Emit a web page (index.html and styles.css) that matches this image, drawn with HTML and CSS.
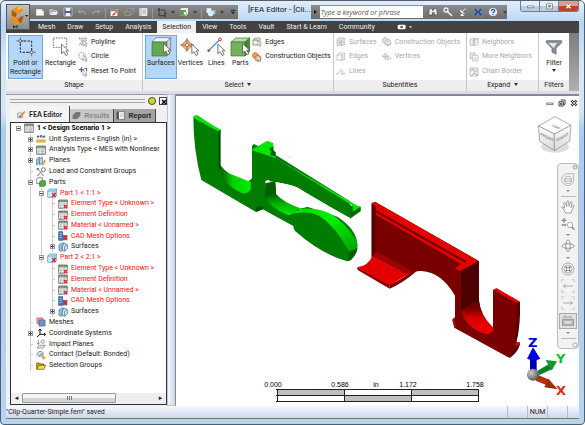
FILE: index.html
```
<!DOCTYPE html>
<html lang="en">
<head>
    <meta charset="UTF-8">
    <meta name="viewport" content="width=device-width, initial-scale=1.0">
    <title>FEA Editor</title>
    <link rel="stylesheet" href="styles.css">
</head>
<body>
    <!-- shared icons -->
    <svg class="defs" width="0" height="0">
        <defs>
            <linearGradient id="greenBlade" x1="0" y1="0" x2="1" y2="1">
                <stop offset="0" stop-color="#00d800"/>
                <stop offset=".45" stop-color="#00f000"/>
                <stop offset="1" stop-color="#00a000"/>
            </linearGradient>
            <linearGradient id="greenDip" x1="0" y1="0" x2="1" y2="0">
                <stop offset="0" stop-color="#005a00"/>
                <stop offset=".4" stop-color="#00d000"/>
                <stop offset="1" stop-color="#00ee00"/>
            </linearGradient>
            <linearGradient id="greenSlot" x1="0" y1="0" x2="0" y2="1">
                <stop offset="0" stop-color="#004c00"/>
                <stop offset=".5" stop-color="#00b000"/>
                <stop offset="1" stop-color="#00ee00"/>
            </linearGradient>
            <linearGradient id="redDip" x1="0" y1="0" x2="0" y2="1">
                <stop offset="0" stop-color="#4c0000"/>
                <stop offset=".3" stop-color="#800000"/>
                <stop offset=".55" stop-color="#d80000"/>
                <stop offset="1" stop-color="#f00000"/>
            </linearGradient>
            <linearGradient id="cubeShade" x1="0" y1="0" x2="0" y2="1">
                <stop offset="0" stop-color="#fff"/>
                <stop offset="1" stop-color="#d8d8d8"/>
            </linearGradient>
            <radialGradient id="ball" cx=".35" cy=".35" r=".7">
                <stop offset="0" stop-color="#ccc"/>
                <stop offset="1" stop-color="#555"/>
            </radialGradient>
            <symbol id="cursor" viewBox="0 0 20 32">
                <path d="M2 2v24l6-5 5 10 5-3-5-9h7z" fill="#fff" stroke="#555" stroke-width="2"/>
            </symbol>
            <symbol id="sheet" viewBox="0 0 30 30">
                <path d="M2 3h26v25H2z" fill="#eef2ee" stroke="#444" stroke-width="2"/>
                <path d="M2 3h26v7H2z" fill="#777"/>
                <path d="M5 5h5v3H5zM13 5h5v3h-5zM21 5h4v3h-4z" fill="#8fd08f"/>
                <path d="M6 15h5M14 15h10M6 20h5M14 20h10M6 25h5M14 25h10" stroke="#7b8a96" stroke-width="2"/>
            </symbol>
            <symbol id="sheet-x" viewBox="0 0 30 30">
                <use href="#sheet"/>
                <path d="M15 15h15v15H15z" fill="#fff" opacity=".6"/>
                <path d="M17 17l11 11M28 17L17 28" stroke="#d22" stroke-width="4"/>
            </symbol>
            <symbol id="part-x" viewBox="0 0 30 30">
                <path d="M2 9l6-6h21v19l-6 6H2z" fill="#cfeafa" stroke="#3f8fc4" stroke-width="2"/>
                <path d="M2 9h21v19M23 9l6-6" fill="none" stroke="#3f8fc4" stroke-width="2"/>
                <path d="M15 15l11 12M26 15L15 27" stroke="#d22" stroke-width="4"/>
            </symbol>
            <symbol id="mesh-x" viewBox="0 0 30 30">
                <path d="M2 2h12v26H2z" fill="#3d7fc0" stroke="#1f4d80" stroke-width="2"/>
                <path d="M5 7h6M5 13h6M5 19h6" stroke="#cfe5f8" stroke-width="2"/>
                <path d="M15 12h13v16H15z" fill="#777"/>
                <path d="M16 14l11 12M27 14L16 26" stroke="#d22" stroke-width="4"/>
            </symbol>
            <symbol id="surf" viewBox="0 0 30 30">
                <path d="M3 9l8-6h8l-6 7v16l-5 2-5-4z" fill="#9cc6e6" stroke="#2d5f86" stroke-width="2"/>
                <path d="M13 11l8-7 7 4v12l-8 8-7-3z" fill="#d8edf9" stroke="#2d5f86" stroke-width="2"/>
                <path d="M20 13v14M20 13l7-5" stroke="#2d5f86" stroke-width="2"/>
            </symbol>
        </defs>
    </svg>

    <header class="titlebar">
        <button class="app-button" aria-label="Application menu">
            <svg width="22" height="24" viewBox="0 0 66 72">
                <path d="M14 16l22-14 12 8-3 12-15 4-4 10h14l10-4-8 24-18 2-14-12 6-8z" fill="#e8921c"/>
                <path d="M14 16l16 10-4 10-12-4zM40 36l10-4-8 24-10-12z" fill="#a9590b"/>
                <path d="M36 2l12 8-18 6z" fill="#ffc04d"/>
                <path d="M54 30h10l-5 6z" fill="#222"/>
                <path d="M20 70v-8l5 5 5-5v8" fill="none" stroke="#222" stroke-width="3"/>
            </svg>
        </button>
        <div class="quick">
            <button aria-label="New"><svg viewBox="0 0 30 30"><path d="M3 6h17l7 7v13H3z" fill="#fafafa" stroke="#777"/><path d="M20 6v7h7" fill="#bbb"/></svg></button>
            <button aria-label="Open"><svg viewBox="0 0 30 30"><path d="M3 24V8h8l3 3h9v4" fill="#9ab" stroke="#eee" stroke-width="2"/><path d="M3 24l6-9h19l-6 9z" fill="#e4e9ee"/></svg></button>
            <button aria-label="Save"><svg viewBox="0 0 30 30"><path d="M3 3h24v24H3z" fill="#4b5f7a" stroke="#dde" stroke-width="2"/><path d="M8 3h14v9H8zM8 18h14v9H8z" fill="#f4f4f4"/></svg></button>
            <button aria-label="Undo"><svg viewBox="0 0 30 30"><path d="M10 8l-6 6 6 6M5 14h14q6 0 6 8" fill="none" stroke="#aaa" stroke-width="3"/></svg></button>
            <button aria-label="Redo"><svg viewBox="0 0 30 30"><path d="M20 8l6 6-6 6M25 14H11q-6 0-6 8" fill="none" stroke="#aaa" stroke-width="3"/></svg></button>
            <i></i>
            <button aria-label="Edit"><svg viewBox="0 0 30 30"><path d="M2 8h20v19H2z" fill="#fff"/><path d="M2 8h20v5H2z" fill="#4a94dc"/><path d="M10 20L24 4l4 4-13 15z" fill="#f08a24"/><path d="M6 26l4-7 5 5z" fill="#c33"/></svg></button>
            <button aria-label="Results"><svg viewBox="0 0 30 30"><path d="M3 14L14 4h14L18 14zM3 14v12h15V14M18 26l10-9V4" fill="#777" stroke="#aaa" stroke-width="2"/></svg></button>
            <button aria-label="Report"><svg viewBox="0 0 30 30"><path d="M4 3h24v24H4z" fill="#f4f4f4" stroke="#999"/><path d="M9 3v24M13 9h11M13 14h11M13 19h11" stroke="#888" stroke-width="2"/></svg></button>
            <i></i>
            <button aria-label="Selection shape"><svg viewBox="0 0 30 30"><path d="M6 3v6H1M6 9h18v17H6zM24 20h6M24 26v4" fill="none" stroke="#222" stroke-width="3" stroke-dasharray="4 2"/></svg></button>
            <b></b>
            <button aria-label="Select surfaces"><svg viewBox="0 0 30 30"><path d="M3 8l5-5h19v18l-5 5H3z" fill="#eee"/><path d="M3 9h18v17H3z" fill="#4ea34e"/><use href="#cursor" x="12" y="9" width="14" height="21"/></svg></button>
            <b></b>
            <i></i>
            <button aria-label="Visual style"><svg viewBox="0 0 30 30"><path d="M2 4h14v14H2z" fill="#eaf4fc"/><path d="M14 10h14v12H14z" fill="#a9cdea"/><circle cx="14" cy="20" r="8" fill="#dcebf8"/></svg></button>
            <b></b>
            <button class="custom" aria-label="Customize"><svg viewBox="0 0 30 30"><path d="M8 8h14v3H8zM8 14h14l-7 8z" fill="#222"/></svg></button>
        </div>
        <h1>[FEA Editor - [Cli...</h1>
        <div class="infocenter">
            <span class="play"></span>
            <input type="text" aria-label="Search help" placeholder="Type a keyword or phrase">
            <button aria-label="Search"><svg viewBox="0 0 30 30"><path d="M4 4h8l1 6h4l1-6h8l2 20h-9v-7h-6v7H2z" fill="#eee" stroke="#444" stroke-width="2"/></svg></button>
            <button aria-label="Subscription"><svg viewBox="0 0 30 30"><path d="M13 13l14 14" stroke="#eee" stroke-width="5"/><circle cx="9" cy="9" r="6" fill="none" stroke="#eee" stroke-width="4"/></svg></button>
            <button aria-label="Communication"><svg viewBox="0 0 30 30"><path d="M7 7q-2 14 14 13zM6 27l6-8 7 8z" fill="#eee"/><path d="M14 13l9-9" stroke="#eee" stroke-width="3"/></svg></button>
            <button aria-label="Exchange"><svg viewBox="0 0 30 30"><path d="M2 4h8l5 8 5-8h8v5l-7 6 7 6v6h-8l-5-8-5 8H2v-5l7-7-7-6z" fill="#2c4f93" stroke="#c8d4ea"/></svg></button>
            <button aria-label="Help"><svg viewBox="0 0 30 30"><circle cx="15" cy="15" r="13" fill="#eef4fc" stroke="#667"/><path d="M10 12q0-5 5-5t5 4q0 3-5 6v2M15 21v3" fill="none" stroke="#2458a8" stroke-width="4"/></svg></button>
            <b></b>
        </div>
        <div class="window-buttons">
            <button aria-label="Minimize"><svg viewBox="0 0 30 30"><path d="M5 13h20v6H5z" fill="#fff" stroke="#555" stroke-width="2"/></svg></button>
            <button aria-label="Maximize"><svg viewBox="0 0 30 30"><path d="M5 6h20v17H5z" fill="#fff" stroke="#555" stroke-width="2"/><path d="M11 12h8v5h-8z" fill="#9bb" stroke="#555" stroke-width="2"/></svg></button>
            <button class="close" aria-label="Close"><svg viewBox="0 0 30 30"><path d="M8 8l14 13M22 8L8 21" stroke="#555" stroke-width="8"/><path d="M8 8l14 13M22 8L8 21" stroke="#fff" stroke-width="5"/></svg></button>
        </div>
    </header>

    <nav class="menu">
        <a href="#">Mesh</a>
        <a href="#">Draw</a>
        <a href="#">Setup</a>
        <a href="#">Analysis</a>
        <a href="#" class="current">Selection</a>
        <a href="#">View</a>
        <a href="#">Tools</a>
        <a href="#">Vault</a>
        <a href="#">Start &amp; Learn</a>
        <a href="#">Community</a>
        <button aria-label="Minimize ribbon"><svg width="16" height="6" viewBox="0 0 48 18"><rect x="2" y="2" width="24" height="14" rx="4" fill="#fff"/><path d="M10 7h8v4h-8z" fill="#333"/><path d="M36 7h9l-4 5z" fill="#fff"/></svg></button>
    </nav>

    <div class="ribbon">
        <section class="panel shape">
            <div class="tools">
                <button class="big on">
                    <svg viewBox="0 0 66 60"><path d="M16 12h34v34H16z" fill="none" stroke="#222" stroke-width="3" stroke-dasharray="7 4"/><path d="M4 12h24M16 1v23M38 46h24M50 35v23" stroke="#444" stroke-width="2"/><circle cx="16" cy="12" r="4" fill="#fff" stroke="#333" stroke-width="2"/><circle cx="50" cy="46" r="4" fill="#fff" stroke="#333" stroke-width="2"/></svg>
                    Point or<br>Rectangle
                </button>
                <button class="big">
                    <svg viewBox="0 0 66 60"><path d="M10 3h40v28H10z" fill="none" stroke="#333" stroke-width="2" stroke-dasharray="5 3"/><use href="#cursor" x="32" y="19" width="24" height="38"/></svg>
                    Rectangle
                </button>
                <div class="list">
                    <button><svg viewBox="0 0 30 30"><path d="M2 3h24l-4 20H4l8-10z" fill="#ddd" stroke="#777" stroke-width="2" stroke-dasharray="4 2"/><use href="#cursor" x="13" y="7" width="15" height="23"/></svg>Polyline</button>
                    <button><svg viewBox="0 0 30 30"><circle cx="12" cy="12" r="10" fill="none" stroke="#555" stroke-width="2" stroke-dasharray="4 2"/><use href="#cursor" x="13" y="7" width="15" height="23"/></svg>Circle</button>
                    <button><svg viewBox="0 0 30 30"><path d="M2 8h16M10 0v16M19 4h7v9" fill="none" stroke="#356" stroke-width="3"/><use href="#cursor" x="13" y="7" width="15" height="23"/></svg>Reset To Point</button>
                </div>
            </div>
            <h2>Shape</h2>
        </section>
        <section class="panel select">
            <div class="tools">
                <button class="big on">
                    <svg viewBox="0 0 66 60"><path d="M6 15L18 2h44L50 15z" fill="#eef3f4" stroke="#667" stroke-width="2"/><path d="M50 15L62 2v42L50 57z" fill="#c8d4da" stroke="#667" stroke-width="2"/><path d="M6 15h44v42H6z" fill="#64a84f" stroke="#3b7431" stroke-width="2"/><use href="#cursor" x="38" y="17" width="24" height="38"/></svg>
                    Surfaces
                </button>
                <button class="big">
                    <svg viewBox="0 0 66 60"><path d="M24 7l17 17-17 17L7 24z" fill="#f2b183" stroke="#a86433" stroke-width="2"/><path d="M3 24h42M24 3v42" stroke="#8a5530" stroke-width="2"/><circle cx="24" cy="24" r="5" fill="#fff" stroke="#8a5530" stroke-width="2"/><use href="#cursor" x="36" y="19" width="24" height="38"/></svg>
                    Vertices
                </button>
                <button class="big">
                    <svg viewBox="0 0 66 60"><path d="M12 40L44 8" stroke="#4295d0" stroke-width="4"/><circle cx="11" cy="41" r="4" fill="#d33"/><circle cx="45" cy="7" r="4" fill="#fff" stroke="#d33" stroke-width="3"/><use href="#cursor" x="36" y="19" width="24" height="38"/></svg>
                    Lines
                </button>
                <button class="big">
                    <svg viewBox="0 0 66 60"><path d="M6 15L20 3h42L48 15z" fill="#b9dcaa" stroke="#39702b" stroke-width="2"/><path d="M48 15L62 3v40L48 57z" fill="#478637" stroke="#39702b" stroke-width="2"/><path d="M6 15h42v42H6z" fill="#72b259" stroke="#39702b" stroke-width="2"/><use href="#cursor" x="38" y="17" width="24" height="38"/></svg>
                    Parts
                </button>
                <div class="list">
                    <button><svg viewBox="0 0 30 30"><path d="M3 9l6-6h15v15l-6 6H3z" fill="#eef4ee" stroke="#667" stroke-width="2"/><path d="M3 9h15v15" fill="none" stroke="#5a5" stroke-width="3"/><use href="#cursor" x="14" y="8" width="14" height="22"/></svg>Edges</button>
                    <button><svg viewBox="0 0 30 30"><path d="M9 1l9 5v9l-9 5-7-5V6z" fill="#f0a25c" stroke="#b0662a" stroke-width="2"/><circle cx="18" cy="19" r="9" fill="#f7c08e" stroke="#b0662a" stroke-width="2"/><use href="#cursor" x="14" y="8" width="14" height="22"/></svg>Construction Objects</button>
                </div>
            </div>
            <h2>Select <b></b></h2>
        </section>
        <section class="panel sub">
            <div class="tools">
                <div class="list">
                    <button disabled><svg viewBox="0 0 30 30"><path d="M3 8l5-5h17v17l-5 5H3z" fill="#e4e4e4" stroke="#aaa" stroke-width="2"/><path d="M8 10h9v12H8z" fill="#ccc"/><path d="M17 12v14l4-4h6z" fill="#fff" stroke="#aaa" stroke-width="2"/></svg>Surfaces</button>
                    <button disabled><svg viewBox="0 0 30 30"><path d="M3 9l6-6h17v15l-6 6H3zM3 9h17v15M20 9l6-6" fill="#fff" stroke="#aaa" stroke-width="2"/><path d="M17 12v14l4-4h6z" fill="#fff" stroke="#aaa" stroke-width="2"/></svg>Edges</button>
                    <button disabled><svg viewBox="0 0 30 30"><path d="M3 21L17 5" stroke="#aaa" stroke-width="2"/><circle cx="3" cy="21" r="2" fill="#aaa"/><path d="M17 10v14l4-4h6z" fill="#fff" stroke="#aaa" stroke-width="2"/></svg>Lines</button>
                </div>
                <div class="list">
                    <button disabled><svg viewBox="0 0 30 30"><path d="M9 1l9 5v9l-9 5-7-5V6z" fill="#e4e4e4" stroke="#aaa" stroke-width="2"/><circle cx="18" cy="17" r="9" fill="#eee" stroke="#aaa" stroke-width="2"/><path d="M17 12v14l4-4h6z" fill="#fff" stroke="#aaa" stroke-width="2"/></svg>Construction Objects</button>
                    <button disabled><svg viewBox="0 0 30 30"><path d="M10 5l8 8-8 8-8-8zM0 13h20M10 3v20" fill="none" stroke="#aaa" stroke-width="2"/><path d="M17 10v14l4-4h6z" fill="#fff" stroke="#aaa" stroke-width="2"/></svg>Vertices</button>
                </div>
            </div>
            <h2>Subentities</h2>
        </section>
        <section class="panel expand">
            <div class="tools">
                <div class="list">
                    <button disabled><svg viewBox="0 0 30 30"><path d="M3 8l5-4h9v16l-4 5H3zM13 8h10l5-4v16l-5 5H13zM17 4h11" fill="#eee" stroke="#aaa" stroke-width="2"/></svg>Neighbors</button>
                    <button disabled><svg viewBox="0 0 30 30"><path d="M3 3h15v16H3z" fill="#eee" stroke="#aaa" stroke-width="2"/><path d="M10 10h17v17H10z" fill="#fff" stroke="#aaa" stroke-width="2"/><path d="M14 15h9v8h-9z" fill="#ddd"/></svg>More Neighbors</button>
                    <button disabled><svg viewBox="0 0 30 30"><path d="M3 3h24v24H3z" fill="#f4f4f4" stroke="#aaa" stroke-width="2"/><path d="M3 12l10-6 4 10 10-8M6 27l9-8 12 6" fill="none" stroke="#aaa" stroke-width="3"/></svg>Chain Border</button>
                </div>
            </div>
            <h2>Expand <b></b></h2>
        </section>
        <section class="panel filters">
            <div class="tools">
                <button class="big">
                    <svg viewBox="0 0 66 60"><path d="M10 11h46v6L39 34v18l-12-7V34L10 17z" fill="#8b9399" stroke="#50575c" stroke-width="2"/><path d="M16 18h26L32 33z" fill="#e4e8ea"/></svg>
                    Filter
                    <b></b>
                </button>
            </div>
            <h2>Filters</h2>
        </section>
    </div>

    <main>
        <aside>
            <div class="grip">
                <span></span>
                <button class="pin" aria-label="Pin"></button>
                <button aria-label="Close panel"><svg width="6" height="6" viewBox="0 0 6 6"><path d="M1 1l4 4M5 1L1 5" stroke="#000" stroke-width="1.5"/></svg></button>
            </div>
            <div class="tabs">
                <button class="active"><svg viewBox="0 0 30 30"><path d="M2 10h17v16H2z" fill="#dbeaf8" stroke="#58a" stroke-width="2"/><path d="M9 19L24 3l4 4-14 16z" fill="#f08a24"/><path d="M6 26l3-8 6 5z" fill="#c33"/></svg>FEA Editor</button>
                <button disabled><svg viewBox="0 0 30 30"><path d="M2 14L13 3h15v12L17 27H2z" fill="#777"/></svg>Results</button>
                <button><svg viewBox="0 0 30 30"><path d="M2 2h26v26H2z" fill="#fff" stroke="#444" stroke-width="2"/><path d="M3 3h7v24H3z" fill="#555"/><path d="M14 9h10M14 14h10M14 19h10" stroke="#99a" stroke-width="2"/></svg>Report</button>
            </div>
            <div class="tree">
                <ul>
                    <li class="root"><i class="box open"></i><svg><use href="#sheet"/></svg>1 &lt; Design Scenario 1 &gt;</li>
                    <li class="l1"><i class="box"></i><svg viewBox="0 0 30 30"><path d="M2 17h26v8H2z" fill="#f2b63a" stroke="#a87414"/><path d="M4 11V6h4v5M13 11V5h5v6M22 11V6h4v5" fill="none" stroke="#456" stroke-width="3"/></svg>Unit Systems &lt; English (in) &gt;</li>
                    <li class="l1"><i class="box"></i><svg><use href="#sheet"/></svg>Analysis Type &lt; MES with Nonlinear</li>
                    <li class="l1"><i class="box"></i><svg viewBox="0 0 30 30"><path d="M2 10l8-7v17l-8 7z" fill="#a7cfee" stroke="#268" stroke-width="2"/><path d="M11 10l8-7v17l-8 7z" fill="#cde5f7" stroke="#268" stroke-width="2"/><path d="M17 26l9-14 3 3-9 13z" fill="#f39a2a" stroke="#853"/></svg>Planes</li>
                    <li class="l1"><i class="leaf"></i><svg viewBox="0 0 30 30"><path d="M4 5l10 10 8 12M14 15L4 27M3 5h6M4 4v6" fill="none" stroke="#333" stroke-width="2"/><circle cx="22" cy="8" r="6" fill="#fff" stroke="#333" stroke-width="2"/></svg>Load and Constraint Groups</li>
                    <li class="l1"><i class="box open"></i><svg viewBox="0 0 30 30"><path d="M2 5l4-3h13v18H2z" fill="#fff" stroke="#555" stroke-width="2"/><path d="M11 14l4-3h13v14l-3 3H11z" fill="#4fae4a" stroke="#276b25" stroke-width="2"/></svg>Parts</li>
                    <li class="l2 bad"><i class="box open"></i><svg><use href="#part-x"/></svg>Part 1 &lt; 1:1 &gt;</li>
                    <li class="l3 bad"><i class="leaf"></i><svg><use href="#sheet-x"/></svg>Element Type &lt; Unknown &gt;</li>
                    <li class="l3 bad"><i class="leaf"></i><svg><use href="#sheet-x"/></svg>Element Definition</li>
                    <li class="l3 bad"><i class="leaf"></i><svg><use href="#sheet-x"/></svg>Material &lt; Unnamed &gt;</li>
                    <li class="l3 bad"><i class="leaf"></i><svg><use href="#mesh-x"/></svg>CAD Mesh Options</li>
                    <li class="l3"><i class="box"></i><svg><use href="#surf"/></svg>Surfaces</li>
                    <li class="l2 bad"><i class="box open"></i><svg><use href="#part-x"/></svg>Part 2 &lt; 2:1 &gt;</li>
                    <li class="l3 bad last"><i class="leaf"></i><svg><use href="#sheet-x"/></svg>Element Type &lt; Unknown &gt;</li>
                    <li class="l3 bad last"><i class="leaf"></i><svg><use href="#sheet-x"/></svg>Element Definition</li>
                    <li class="l3 bad last"><i class="leaf"></i><svg><use href="#sheet-x"/></svg>Material &lt; Unnamed &gt;</li>
                    <li class="l3 bad last"><i class="leaf"></i><svg><use href="#mesh-x"/></svg>CAD Mesh Options</li>
                    <li class="l3 last"><i class="box"></i><svg><use href="#surf"/></svg>Surfaces</li>
                    <li class="l1"><i class="leaf"></i><svg viewBox="0 0 30 30"><path d="M3 3h17v17H3z" fill="#f0b0a8" stroke="#c33" stroke-width="2"/><path d="M9 9h18v18H9z" fill="#9ab8dc" stroke="#247" stroke-width="2"/><path d="M15 9v18M21 9v18M9 15h18M9 21h18" stroke="#247"/></svg>Meshes</li>
                    <li class="l1"><i class="box"></i><svg viewBox="0 0 30 30"><path d="M12 4v15h16M12 19l-9 8M8 8l4-5 4 5M24 15l5 4-5 4" fill="none" stroke="#111" stroke-width="3"/></svg>Coordinate Systems</li>
                    <li class="l1"><i class="leaf"></i><svg viewBox="0 0 30 30"><path d="M7 2v14M3 11l4 5 4-5M3 27l7-8h18l-7 8z" fill="#eef" stroke="#667" stroke-width="2"/><circle cx="20" cy="8" r="5" fill="#fff" stroke="#667" stroke-width="2"/></svg>Impact Planes</li>
                    <li class="l1"><i class="leaf"></i><svg viewBox="0 0 30 30"><path d="M2 13q3-10 15-9l6 6-11 3-2 7z" fill="#dde8f5" stroke="#568" stroke-width="2"/><path d="M13 15l7-2 3 4-8 3z" fill="#9bd" stroke="#568"/><path d="M23 17l6 6-6 6-6-6z" fill="#f2a52e"/></svg>Contact (Default: Bonded)</li>
                    <li class="l1"><i class="leaf"></i><svg viewBox="0 0 30 30"><path d="M2 25V6h9l3 3h10v5" fill="#d8a400" stroke="#443" stroke-width="2"/><path d="M2 25l6-12h21l-6 12z" fill="#ffdd33" stroke="#443" stroke-width="2"/></svg>Selection Groups</li>
                </ul>
                <div class="hscroll">
                    <button aria-label="Scroll left">&#9666;</button>
                    <div class="track"><span></span></div>
                    <button aria-label="Scroll right">&#9656;</button>
                </div>
            </div>
        </aside>
        <div class="splitter"></div>
        <div class="viewport">
            <svg class="scene" width="100%" height="100%">
                <!-- green part -->
                <g transform="translate(0 -6) scale(.3333)">
                    <path d="M52 80q0 100 24 190l164 96 20-8 92 50q0 10 6 16 80 70 156 90l12-4 18-40q2-50-60-90l-90-30-40 10-38-22-46-30-2-36 30-6 62 22 160 84 2-38-224-140-64-32-6 6v96q-10 14-24 10-50-20-72-50V122L64 76z" fill="#007c00"/>
                    <path d="M52 80l8-5 74 44v6h-6L52 83z" fill="#00e600"/>
                    <path d="M128 122l6-2v120l-6-6z" fill="#005000"/>
                    <path d="M134 240l90 36v22q-8 14-24 12-40-18-58-44z" fill="url(#greenDip)"/>
                    <path d="M226 180l48-28 18 8v20l8 8-2 16 248 144 8 4v8l-20 12-4-2-2-24-230-142z" fill="#00e600"/>
                    <path d="M280 176l12-7v12l7 6-1 12-16-4 4-10z" fill="#006000"/>
                    <path d="M522 346l10 4v14l22-14v14l-32 22z" fill="#006c00"/>
                    <path d="M532 350l22-2-24 16z" fill="#00e600"/>
                    <path d="M340 200l1 2M386 262l2 1M430 288l2 1M475 314l2 1" stroke="#004000" stroke-width="2"/>
                    <path d="M268 280l30-6 4 38-34 14z" fill="#006000"/>
                    <path d="M270 322l32-16q26 32 72 48l-36 22q-54-20-68-54z" fill="url(#greenSlot)"/>
                    <path d="M338 374l36-18q64-4 104 24 50 40 66 80v16l-24 10q-44-80-90-108-36-18-92-4z" fill="url(#greenBlade)"/>
                    <path d="M520 485l25-11q-4 28-30 40z" fill="#006000"/>
                    <path d="M240 352l20-4v10l-20 8z" fill="#004c00"/>
                    <path d="M302 277q60 10 74 22 30 20 148 86V346L280 208v66z" fill="#007c00"/>
                    <path d="M300 312V277q60 10 70 20 60 34 140 82l10 12-50-30q-50-20-96-6-50-16-74-43z" fill="#fff"/>
                </g>
                <!-- red part -->
                <g transform="translate(175 84) scale(.3333)">
                    <path d="M62 70l10-5 312 178v120q6 54 42 82V330l10-5 70 40q0 80-10 120l10 6q-4 22-28 42l-8-2-160-88-6-22 8-4v-70q-40-70-100-74-20-2-32 10L62 230z" fill="#780000"/>
                    <path d="M62 70l10-5 311 179-53 30-18-10 18-12L74 104v-14z" fill="#e40000"/>
                    <path d="M76 94l268 152" stroke="#6a0000" stroke-width="6"/>
                    <path d="M62 70l12 8v152l-12 8z" fill="#5a0000"/>
                    <path d="M330 272l53-29v120L330 394z" fill="#4c0000"/>
                    <path d="M330 392l53-34q6 50 43 84v12q-12 14-34 4-50-22-62-66z" fill="url(#redDip)"/>
                    <path d="M18 262q34-4 46-34l108 58q-20 6-56 32z" fill="#e40000"/>
                    <path d="M64 228l110 60 12-12-110-62z" fill="#a00000"/>
                    <path d="M18 262l98 54v10L20 270z" fill="#900000"/>
                    <path d="M116 316q40-24 84-46l-6 6q-40 34-78 50z" fill="#7a0000"/>
                    <path d="M427 330l10-5 70 40-8 5z" fill="#e40000"/>
                    <path d="M499 370l8-5q2 70-10 118l-6 20z" fill="#5a0000"/>
                    <path d="M494 490l12-4v10q-6 22-32 38z" fill="#600000"/>
                    <path d="M494 490l12-4v6l-14 8z" fill="#e40000"/>
                    <path d="M304 418l8-6v14q0 8 8 16l-10-4z" fill="#b00000"/>
                </g>
                <!-- axis triad -->
                <g transform="translate(175 84) scale(.3333)">
                    <path d="M537 538h20v42h-20z" fill="#0000b0"/>
                    <path d="M528 536l18-34 22 34q-20 10-40 0z" fill="#0000e0"/>
                    <path d="M560 572l34-20 8 16-38 18z" fill="#0a8028"/>
                    <path d="M584 540l34 4-16 28z" fill="#0a9a30"/>
                    <path d="M560 584l36 16-8 16-34-14z" fill="#b83010"/>
                    <path d="M592 596l28 32-40-6z" fill="#a02808"/>
                    <circle cx="546" cy="584" r="18" fill="url(#ball)"/>
                </g>
                <g class="axis">
                    <text x="352" y="251" fill="#0000e0">Z</text>
                    <text x="380" y="267" fill="#0ac030">Y</text>
                    <text x="380" y="299" fill="#d83010">X</text>
                </g>
                <!-- scale -->
                <g class="scale" shape-rendering="crispEdges">
                    <path d="M101 293h67v6h-67zM168 299h67v6h-67zM235 293h67v6h-67z" fill="#bfbfbf"/>
                    <path d="M100 293h203M100 299h203M100 305h203M101 293v12M168 293v12M235 293v12M302 293v12" stroke="#222" fill="none"/>
                    <text x="97" y="291">0.000</text>
                    <text x="164" y="291">0.586</text>
                    <text x="200" y="291">in</text>
                    <text x="232" y="291">1.172</text>
                    <text x="299" y="291">1.758</text>
                </g>
            </svg>
            <div class="doc-buttons">
                <button aria-label="Minimize view"><svg viewBox="0 0 24 24"><path d="M2 12h19v5H2z" fill="#fff" stroke="#444" stroke-width="2"/></svg></button>
                <button aria-label="Restore view"><svg viewBox="0 0 24 24"><path d="M8 3h13v13h-4M3 8h13v13H3zM8 12h4v5H8z" fill="#fff" stroke="#444" stroke-width="3"/></svg></button>
                <button aria-label="Close view"><svg viewBox="0 0 24 24"><path d="M4 4l16 16M20 4L4 20" stroke="#444" stroke-width="7"/><path d="M4 4l16 16M20 4L4 20" stroke="#fff" stroke-width="2"/></svg></button>
            </div>
            <svg class="cube" width="36" height="40" viewBox="0 0 108 120">
                <ellipse cx="54" cy="92" rx="42" ry="18" fill="#ddd"/>
                <path d="M54 2l48 26-50 26L4 30z" fill="#fff" stroke="#888" stroke-width="2"/>
                <path d="M4 30l48 24v50L8 76z" fill="url(#cubeShade)" stroke="#888" stroke-width="2"/>
                <path d="M52 54l50-26-4 48-46 28z" fill="url(#cubeShade)" stroke="#888" stroke-width="2"/>
                <g class="cube-text">
                    <text transform="matrix(.9 .4 -.7 .45 42 30)">TOP</text>
                    <text transform="matrix(.9 .45 0 1 10 58)">FRONT</text>
                    <text transform="matrix(.9 -.5 0 1 58 78)">RIGHT</text>
                </g>
            </svg>
            <div class="navbar">
                <svg class="dot" viewBox="0 0 30 30"><circle cx="15" cy="15" r="10" fill="#ddd" stroke="#999" stroke-width="4"/></svg>
                <button aria-label="Steering wheel"><svg viewBox="0 0 42 42"><path d="M21 2h17v19a18 18 0 1 1-17-19z" fill="#f2f2f2" stroke="#999" stroke-width="2"/><circle cx="21" cy="21" r="11" fill="#fff" stroke="#999" stroke-width="2"/><path d="M13 17h16v9H13zM13 21h16" fill="none" stroke="#aaa" stroke-width="2"/></svg></button>
                <b></b>
                <hr>
                <button aria-label="Pan"><svg viewBox="0 0 42 42"><path d="M14 39q-4-10-12-17 2-5 9 3L8 9q4-4 6 2l3 9 1-16q4-4 5 0l1 15 5-13q4-2 4 3l-3 14 6-7q4 0 2 5-6 9-8 18z" fill="#fff" stroke="#777" stroke-width="2"/></svg></button>
                <button aria-label="Zoom"><svg viewBox="0 0 42 42"><path d="M2 10h14M9 3v14M2 24h14" stroke="#888" stroke-width="4"/><circle cx="27" cy="24" r="8" fill="#fff" stroke="#888" stroke-width="2"/><path d="M33 30l7 8" stroke="#777" stroke-width="4"/></svg></button>
                <b></b>
                <button aria-label="Orbit"><svg viewBox="0 0 42 42"><ellipse cx="21" cy="21" rx="18" ry="7" fill="none" stroke="#777" stroke-width="2"/><ellipse cx="21" cy="21" rx="7" ry="17" fill="none" stroke="#777" stroke-width="2"/><path d="M16 8l5-6 5 6M34 16l6 5-6 5" fill="#fff" stroke="#777" stroke-width="2"/></svg></button>
                <b></b>
                <button aria-label="Center"><svg viewBox="0 0 42 42"><circle cx="21" cy="21" r="18" fill="#f4f4f4" stroke="#888" stroke-width="2"/><circle cx="21" cy="21" r="12" fill="#fff" stroke="#888" stroke-width="2"/><path d="M14 14l5 5M28 14l-5 5M14 28l5-5M28 28l-5-5" stroke="#555" stroke-width="4"/></svg></button>
                <button aria-label="Previous view"><svg viewBox="0 0 42 42"><path d="M2 10V2h8M32 2h8v8M2 32v8h8M32 40h8v-8" fill="none" stroke="#bbb" stroke-width="2"/><path d="M8 21h28M14 16l-7 5 7 5" fill="none" stroke="#888" stroke-width="2"/></svg></button>
                <button aria-label="Next view"><svg viewBox="0 0 42 42"><path d="M2 10V2h8M32 2h8v8M2 32v8h8M32 40h8v-8" fill="none" stroke="#bbb" stroke-width="2"/><path d="M6 21h28M28 16l7 5-7 5" fill="none" stroke="#888" stroke-width="2"/></svg></button>
                <button class="pressed" aria-label="Look at"><svg viewBox="0 0 48 42"><path d="M6 12l8-10v6l22-2v6" fill="#ccc" stroke="#888" stroke-width="2"/><path d="M5 16h38v20H5z" fill="#bbb" stroke="#777" stroke-width="2"/><path d="M11 21h26v10H11z" fill="#ddd" stroke="#999"/></svg></button>
                <b></b>
                <hr>
                <svg class="dot" viewBox="0 0 30 30"><circle cx="15" cy="15" r="10" fill="#fff" stroke="#999" stroke-width="4"/></svg>
            </div>
        </div>
    </main>

    <footer>
        <p>"Clip-Quarter-Simple.fem" saved</p>
        <span></span>
        <span class="num">NUM</span>
        <span></span>
        <span class="corner"></span>
    </footer>
</body>
</html>
```
FILE: styles.css
```
* {
    box-sizing: border-box;
}

html {
    background: #fff;
}

body {
    margin: 0;
    height: 100vh;
    padding: 0 5px 5px;
    display: flex;
    flex-direction: column;
    overflow: hidden;
    background: linear-gradient(to bottom, #e2eefa 0, #b4d4f4 24px, #d6e6f5 60px, #d6e6f5 110px, #a6cdf2 130px, #b4d4f2 100%);
    border: 1px solid #50606e;
    border-radius: 5px 5px 4px 4px;
    font-family: Roboto, "Liberation Sans", sans-serif;
    font-size: 7px;
    line-height: 9px;
    color: #222;
}

.defs {
    position: absolute;
}

button {
    margin: 0;
    padding: 0;
    border: none;
    background: none;
    font: inherit;
    color: inherit;
    cursor: pointer;
}

svg {
    display: block;
    flex: none;
}

h1, h2, p, ul {
    margin: 0;
    padding: 0;
    font-weight: normal;
    font-size: inherit;
}

/* small drop-down arrows */
b {
    display: inline-block;
    flex: none;
    border: 2px solid transparent;
    border-top: 3px solid #333;
    border-bottom: 0;
}

/* title bar */
.titlebar {
    display: flex;
    height: 20px;
    flex: none;
}

.app-button {
    width: 24px;
    height: 26px;
    padding: 0;
    position: relative;
    z-index: 2;
    margin-top: 3px;
    border: 1px solid #555;
    background: linear-gradient(#c4c4c4, #8a8a8a);
}

.quick {
    display: flex;
    align-items: center;
    width: 211px;
    height: 14px;
    margin-top: 4px;
    padding-left: 5px;
    gap: 4px;
    background: linear-gradient(#8c8c8c, #6c6c6c);
}

.quick svg,
.infocenter svg {
    width: 10px;
    height: 10px;
}

.quick i {
    width: 1px;
    height: 11px;
    background: #999;
}

.quick b,
.infocenter b {
    border-top-color: #444;
}

.titlebar h1 {
    flex: 1;
    padding: 4px 0 0 10px;
    white-space: nowrap;
    line-height: 10px;
    font-size: 8px;
    color: #111;
}

.infocenter {
    display: flex;
    align-items: center;
    height: 14px;
    width: 196px;
    margin: 4px 13px 0 0;
    gap: 5px;
    background: linear-gradient(#8c8c8c, #6c6c6c);
}

.play {
    margin-left: 3px;
    margin-right: -2px;
    border: 2px solid transparent;
    border-left: 3px solid #111;
    border-right: 0;
}

.infocenter input {
    width: 106px;
    height: 12px;
    border: none;
    padding: 0 1px;
    font: italic 7px "Open Sans", sans-serif;
    background: #fff;
}

.infocenter input::placeholder {
    color: #555;
}

.window-buttons {
    display: flex;
    height: 11px;
    border: 1px solid #6d7f90;
    border-top: none;
    border-radius: 0 0 3px 3px;
    overflow: hidden;
}

.window-buttons button {
    width: 20px;
    padding-left: 5px;
    border-right: 1px solid #6d7f90;
    background: linear-gradient(#e4eef8 50%, #b8cbe0 50%);
}

.window-buttons svg {
    width: 9px;
    height: 9px;
}

.window-buttons .close {
    border: none;
    background: linear-gradient(#e09a88 50%, #c0442c 50%);
}

/* menu tabs */
.menu {
    display: flex;
    align-items: stretch;
    flex: none;
    height: 12px;
    padding-left: 26px;
    background: #424242;
}

.menu a {
    padding: 0 6px;
    line-height: 12px;
    font-size: 7px;
    color: #eee;
    text-decoration: none;
}

.menu .current {
    padding: 0 5px;
    background: #f0f0f0;
    color: #222;
}

.menu button {
    padding: 0 16px;
}

/* ribbon */
.ribbon {
    display: flex;
    flex: none;
    height: 58px;
    background: linear-gradient(#7c7c7c, #b0b0b0);
}

.panel {
    display: flex;
    flex-direction: column;
    background: #fff;
    border-right: 1px solid #c4c4c4;
}

.shape { width: 137px; }
.select { width: 191px; }
.sub { width: 133px; }
.expand { width: 72px; }
.filters { width: 30px; border: none; }

.tools {
    display: flex;
    flex: 1;
    padding: 2px 2px 1px;
    gap: 1px;
}

.panel h2 {
    height: 11px;
    line-height: 10px;
    text-align: center;
    background: #eee;
}

.panel h2 b {
    margin-left: 2px;
    vertical-align: 1px;
    border-width: 3px 2px 0;
}

.big {
    display: flex;
    flex-direction: column;
    align-items: center;
    align-self: stretch;
    line-height: 9px;
    padding: 1px 0 0;
    border: 1px solid transparent;
}

.big svg {
    width: 22px;
    height: 20px;
    margin-bottom: 2px;
}

.big.on {
    padding: 1px 1px 0;
    background: #b5d7f7;
    border-color: #6fa8dc;
}

.list {
    display: grid;
    grid-template-rows: repeat(3, 1fr);
    align-items: center;
    white-space: nowrap;
}

.list button {
    display: flex;
    align-items: center;
    gap: 3px;
}

.list svg {
    width: 10px;
    height: 10px;
}

.list button:disabled {
    color: #a8a8a8;
}

.select .tools {
    gap: 0;
}

.sub .tools {
    gap: 5px;
}

.filters .tools {
    justify-content: center;
    padding: 2px 0 1px;
}

.filters .big b {
    margin-top: 1px;
}

/* work area */
main {
    display: flex;
    flex: 1;
    min-height: 0;
    border-top: 3px solid #d9dcee;
    background: #f0f0f2;
}

aside {
    display: flex;
    flex-direction: column;
    width: 161px;
    padding: 1px 0 1px 4px;
    border-top: 1px solid #999;
}

.grip {
    display: flex;
    align-items: center;
    height: 10px;
    flex: none;
    gap: 3px;
}

.grip span {
    flex: 1;
    height: 4px;
    border: 1px solid #aaa;
    border-width: 1px 0;
}

.grip button {
    width: 8px;
    height: 8px;
    padding: 1px;
    border: 1px solid #444;
    background: #fff;
}

.grip .pin {
    background: #d8d820;
    border-radius: 4px;
}

.tabs {
    display: flex;
    align-items: flex-end;
    height: 16px;
    flex: none;
}

.tabs button {
    display: flex;
    align-items: center;
    height: 13px;
    padding: 0 4px 0 2px;
    gap: 3px;
    border-right: 1px solid #444;
    background: #a4a4a4;
    font: bold 7px "Liberation Sans", sans-serif;
    color: #222;
}

.tabs svg {
    width: 9px;
    height: 9px;
}

.tabs button:disabled {
    background: #c8c8c8;
    color: #888;
}

.tabs .active {
    height: 16px;
    padding: 0 7px;
    background: #f4f4f4;
    font: bold 7px Lato, sans-serif;
}

.tree {
    display: flex;
    flex: 1;
    flex-direction: column;
    justify-content: space-between;
    min-height: 0;
    border: 1px solid #333;
    background: #fff;
    overflow: hidden;
}

.tree ul {
    display: grid;
    grid-auto-rows: 1fr;
    height: 248px;
    flex: none;
    list-style: none;
}

.tree li {
    display: flex;
    align-items: center;
    padding-left: 5px;
    white-space: nowrap;
    min-height: 0;
}

.tree li svg {
    width: 10px;
    height: 10px;
    margin: 0 3px;
}

.tree .root {
    font-weight: bold;
    color: #000;
}

.tree .l1 {
    padding-left: 17px;
    background: linear-gradient(#ccc, #ccc) 19px 0 / 1px 100% no-repeat;
}

.tree .l2 {
    padding-left: 28px;
    background: linear-gradient(#ccc, #ccc) 19px 0 / 1px 100% no-repeat,
        linear-gradient(#ccc, #ccc) 30px 0 / 1px 100% no-repeat;
}

.tree .l3 {
    padding-left: 39px;
    background: linear-gradient(#ccc, #ccc) 19px 0 / 1px 100% no-repeat,
        linear-gradient(#ccc, #ccc) 30px 0 / 1px 100% no-repeat,
        linear-gradient(#ccc, #ccc) 41px 0 / 1px 100% no-repeat;
}

.tree .last {
    background: linear-gradient(#ccc, #ccc) 19px 0 / 1px 100% no-repeat,
        linear-gradient(#ccc, #ccc) 41px 0 / 1px 100% no-repeat;
}

.tree .bad {
    color: #ff1010;
}

.box {
    width: 5px;
    height: 5px;
    border: 1px solid #999;
    background: linear-gradient(#346, #346) 1px 0 / 1px 3px no-repeat,
        linear-gradient(#346, #346) 0 1px / 3px 1px no-repeat, #fff;
}

.box.open {
    background: linear-gradient(#346, #346) 0 1px / 3px 1px no-repeat, #fff;
}

.leaf {
    width: 5px;
    height: 1px;
    background: linear-gradient(#ccc, #ccc) 2px 0 no-repeat;
}

.hscroll {
    display: flex;
    height: 11px;
    flex: none;
    background: #eee;
}

.hscroll button {
    width: 11px;
    line-height: 9px;
    font-family: "DejaVu Sans", sans-serif;
}

.track {
    flex: 1;
}

.track span {
    display: block;
    width: 71%;
    height: 10px;
    border: 1px solid #999;
    border-radius: 1px;
    background: repeating-linear-gradient(to right, #777 0 1px, transparent 1px 2px) center / 5px 4px no-repeat,
        linear-gradient(#f6f6f6 50%, #d4d4d4 50%);
}

.splitter {
    width: 9px;
    border: 1px solid #c0c4d4;
    border-right: 1px solid #888;
    background: linear-gradient(to right, #f4f6fc, #cdd5ec);
}

/* 3D view */
.viewport {
    flex: 1;
    position: relative;
    border-top: 2px solid #888;
    background: #fff;
    overflow: hidden;
}

.scene {
    position: absolute;
}

.axis {
    font: bold 13px "DejaVu Sans", sans-serif;
}

.scale {
    font: 7px "Liberation Sans", sans-serif;
    text-anchor: middle;
}

.cube-text {
    font: bold 13px "Liberation Sans", sans-serif;
    fill: #888;
}

.doc-buttons {
    position: absolute;
    top: 3px;
    right: 1px;
    display: flex;
    gap: 4px;
}

.doc-buttons svg {
    width: 8px;
    height: 8px;
}

.cube {
    position: absolute;
    top: 20px;
    right: 6px;
}

.navbar {
    position: absolute;
    top: 67px;
    right: 0;
    display: flex;
    flex-direction: column;
    align-items: center;
    width: 22px;
    height: 186px;
    justify-content: space-between;
    border: 1px solid #bbb;
    border-radius: 4px;
    background: #f2f2f2;
}

.navbar svg {
    width: 14px;
    height: 14px;
}

.navbar .dot {
    align-self: flex-end;
    width: 6px;
    height: 6px;
}

.navbar b {
    border-top-width: 2px;
    border-top-color: #888;
}

.navbar hr {
    width: 15px;
    margin: 0;
    border: none;
    border-top: 1px solid #bbb;
}

.navbar .pressed {
    padding: 0 1px;
    border: 1px solid #aaa;
    background: #e0e0e0;
}

/* status bar */
footer {
    display: flex;
    flex: none;
    height: 13px;
    line-height: 13px;
    background: linear-gradient(#f6f8fd, #cfd6ea);
    border-bottom: 1px solid #777;
}

footer p {
    flex: 1;
}

footer span {
    width: 20px;
    border-left: 1px solid #b8bccb;
    text-align: center;
}

footer .corner {
    width: 12px;
}
```
